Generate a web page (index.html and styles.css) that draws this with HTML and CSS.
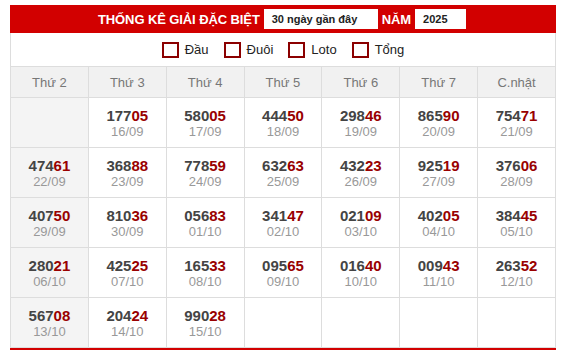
FILE: index.html
```html
<!DOCTYPE html>
<html lang="vi">
<head>
<meta charset="utf-8">
<link rel="stylesheet" href="styles.css">
</head>
<body>
<div class="wrap">
  <div class="bar">
    <span class="title">THỐNG KÊ GIẢI ĐẶC BIỆT</span>
    <span class="field field-days">30 ngày gần đây</span>
    <span class="title">NĂM</span>
    <span class="field field-year">2025</span>
  </div>
  <div class="opts">
    <label class="opt"><span class="box"></span>Đầu</label>
    <label class="opt"><span class="box"></span>Đuôi</label>
    <label class="opt"><span class="box"></span>Loto</label>
    <label class="opt"><span class="box"></span>Tổng</label>
  </div>
  <table class="grid">
    <thead>
      <tr><th>Thứ 2</th><th>Thứ 3</th><th>Thứ 4</th><th>Thứ 5</th><th>Thứ 6</th><th>Thứ 7</th><th>C.nhật</th></tr>
    </thead>
    <tbody>
      <tr>
        <td></td>
        <td><b>177<i>05</i></b><span>16/09</span></td>
        <td><b>580<i>05</i></b><span>17/09</span></td>
        <td><b>444<i>50</i></b><span>18/09</span></td>
        <td><b>298<i>46</i></b><span>19/09</span></td>
        <td><b>865<i>90</i></b><span>20/09</span></td>
        <td><b>754<i>71</i></b><span>21/09</span></td>
      </tr>
      <tr>
        <td><b>474<i>61</i></b><span>22/09</span></td>
        <td><b>368<i>88</i></b><span>23/09</span></td>
        <td><b>778<i>59</i></b><span>24/09</span></td>
        <td><b>632<i>63</i></b><span>25/09</span></td>
        <td><b>432<i>23</i></b><span>26/09</span></td>
        <td><b>925<i>19</i></b><span>27/09</span></td>
        <td><b>376<i>06</i></b><span>28/09</span></td>
      </tr>
      <tr>
        <td><b>407<i>50</i></b><span>29/09</span></td>
        <td><b>810<i>36</i></b><span>30/09</span></td>
        <td><b>056<i>83</i></b><span>01/10</span></td>
        <td><b>341<i>47</i></b><span>02/10</span></td>
        <td><b>021<i>09</i></b><span>03/10</span></td>
        <td><b>402<i>05</i></b><span>04/10</span></td>
        <td><b>384<i>45</i></b><span>05/10</span></td>
      </tr>
      <tr>
        <td><b>280<i>21</i></b><span>06/10</span></td>
        <td><b>425<i>25</i></b><span>07/10</span></td>
        <td><b>165<i>33</i></b><span>08/10</span></td>
        <td><b>095<i>65</i></b><span>09/10</span></td>
        <td><b>016<i>40</i></b><span>10/10</span></td>
        <td><b>009<i>43</i></b><span>11/10</span></td>
        <td><b>263<i>52</i></b><span>12/10</span></td>
      </tr>
      <tr>
        <td><b>567<i>08</i></b><span>13/10</span></td>
        <td><b>204<i>24</i></b><span>14/10</span></td>
        <td><b>990<i>28</i></b><span>15/10</span></td>
        <td></td>
        <td></td>
        <td></td>
        <td></td>
      </tr>
    </tbody>
  </table>
  <div class="next"></div>
</div>
</body>
</html>
```

FILE: styles.css
```css
html, body {
  margin: 0;
  padding: 0;
  background: #fff;
}
body {
  font-family: "Liberation Sans", Arial, sans-serif;
}
.wrap {
  width: 546px;
  margin: 5px 0 0 10px;
}
.bar {
  background: #d20000;
  height: 28px;
  display: flex;
  align-items: center;
  justify-content: center;
  gap: 4px;
  padding-right: 2px;
}
.title {
  color: #fff;
  font-weight: bold;
  font-size: 13px;
  letter-spacing: -0.1px;
}
.field {
  background: #fff;
  height: 20px;
  line-height: 20px;
  box-sizing: border-box;
  padding-left: 8px;
  color: #222;
  font-weight: bold;
  font-size: 11px;
}
.field-days { width: 114px; }
.field-year { width: 51px; }
.opts {
  height: 33px;
  box-sizing: border-box;
  border-left: 1px solid #ddd;
  border-right: 1px solid #ddd;
  display: flex;
  align-items: center;
  justify-content: center;
  gap: 15px;
}
.opt {
  display: flex;
  align-items: center;
  gap: 6px;
  font-size: 13px;
  color: #222;
}
.box {
  width: 17px;
  height: 16px;
  box-sizing: border-box;
  border: 2px solid #8b0000;
  background: #fff;
}
.grid {
  width: 546px;
  border-collapse: collapse;
  table-layout: fixed;
}
.grid th, .grid td {
  border: 1px solid #ddd;
  text-align: center;
  padding: 0;
}
.grid th {
  background: #f1f1f1;
  height: 30px;
  font-weight: normal;
  font-size: 13px;
  color: #777;
}
.grid td {
  height: 49px;
  vertical-align: middle;
}
.grid td:first-child {
  background: #f4f4f4;
}
.grid td b {
  display: block;
  font-size: 15px;
  line-height: 17px;
  color: #444;
}
.grid td i {
  font-style: normal;
  color: #990000;
}
.grid td span {
  display: block;
  font-size: 13px;
  line-height: 15px;
  color: #999;
}
.next {
  height: 6px;
  background: #d20000;
}
```
